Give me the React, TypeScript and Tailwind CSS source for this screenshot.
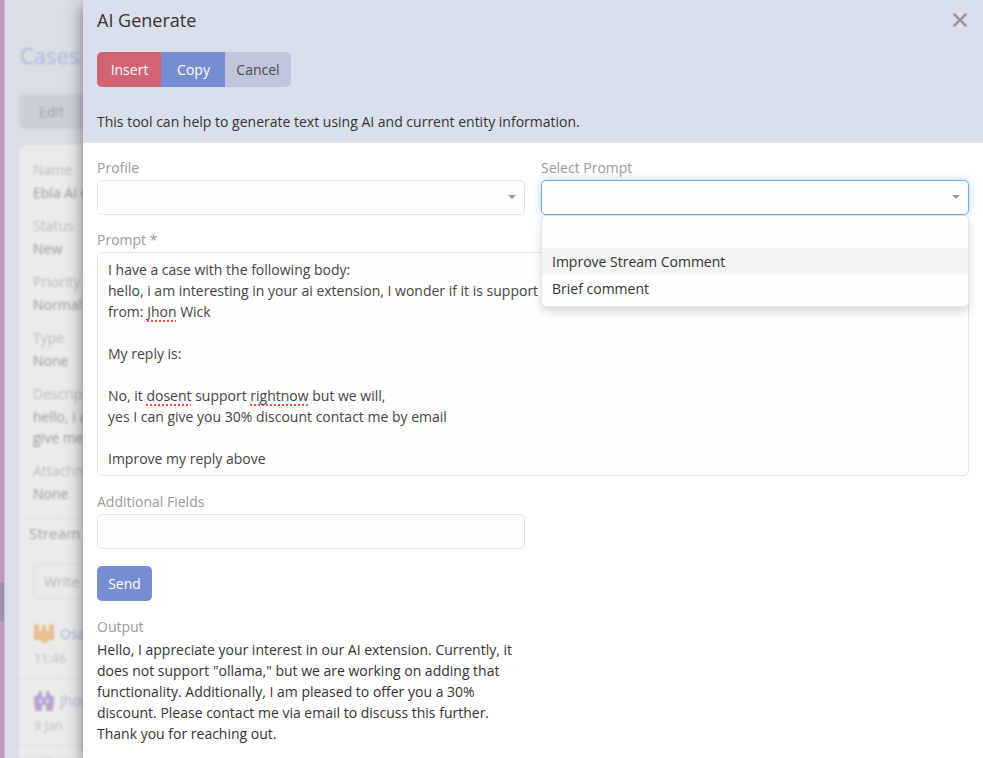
import React from "react";

const details = [
  { label: "Name", value: "Ebla AI C" },
  { label: "Status", value: "New" },
  { label: "Priority", value: "Normal" },
  { label: "Type", value: "None" },
];

function Misspelled({ children }: { children: React.ReactNode }) {
  return (
    <span className="underline decoration-dotted decoration-[#f0504a] decoration-[1.5px] underline-offset-[3px] [text-decoration-skip-ink:none]">
      {children}
    </span>
  );
}

function Caret() {
  return (
    <svg className="h-1 w-2" viewBox="0 0 8 4">
      <path d="M0 0h8L4 4z" fill="#999" />
    </svg>
  );
}

function Backdrop() {
  return (
    <div className="flex h-[758px] w-[90px] overflow-hidden bg-[#d9dee7]">
      <div className="flex w-[4px] shrink-0 flex-col bg-[#b59dbd] pt-[583px]">
        <div className="h-[38px] bg-[#a48ead]" />
      </div>
      <div className="w-px shrink-0 bg-[#c9bdd4]" />
      <div className="ml-[14px] flex w-[71px] shrink-0 flex-col overflow-hidden whitespace-nowrap blur-[0.8px]">
        <h1 className="mt-[39px] h-[33px] shrink-0 pl-px text-[22px] leading-[32px] text-[#acb8de]">Cases</h1>
        <div className="mt-[22px] flex h-[35px] shrink-0 items-center rounded-l-md bg-[#cccfda] pl-[20px] text-[#a3a3a6]">
          Edit
        </div>
        <div className="mt-[16px] shrink-0 grow rounded-tl-lg bg-[#ebebeb] pt-[14px]">
          <div className="pl-[14px]">
            {details.map((d) => (
              <div key={d.label} className="mb-[12px] h-[44px]">
                <div className="h-[23px] leading-[22px] text-[#bbb]">{d.label}</div>
                <div className="leading-[21px] text-[#999]">{d.value}</div>
              </div>
            ))}
            <div className="h-[23px] leading-[22px] text-[#bbb]">Descrip</div>
            <div className="text-[#999]">hello, i a</div>
            <div className="text-[#999]">give me</div>
            <div className="mt-[12px] h-[23px] leading-[22px] text-[#bbb]">Attachm</div>
            <div className="text-[#999]">None</div>
          </div>
          <div className="mt-[13px] border-t border-[#dfdfdf] pl-[10px] pt-[5px] text-[15.3px] text-[#a3a3a3]">
            Stream
          </div>
          <div className="ml-[14px] mt-[20px] flex h-[35px] items-center rounded-l-md border border-r-0 border-[#dddde0] pl-[10px] text-[#b5b5b5]">
            Write
          </div>
          <div className="mt-[24px] flex h-[21px] items-center gap-[6px] pl-[15px] text-[#a9b5dc]">
            <svg className="shrink-0" width="20" height="21" viewBox="0 0 20 21" fill="#e8c08f">
              <path d="M1.500 1H4l1 1v6h3V3l2-2 2 2v5h3V2l1-1h2.500L20 2.500V16l-1 1h-5v1l-3 2H9l-2-2v-1H1l-1-1V2.500z" />
            </svg>
            <span>Osa</span>
          </div>
          <div className="mt-[4px] pl-[15px] text-[12.5px] leading-[21px] text-[#bbb]">11:46</div>
          <div className="mt-[9px] flex h-[33px] items-center gap-[6px] border-t border-[#dfdfdf] pl-[15px] pt-[11px] text-[#a9b5dc]">
            <svg className="shrink-0" width="20" height="20" viewBox="0 0 20 20" fill="#b3a7d2">
              <path
                fillRule="evenodd"
                d="M5 0h2l1 1v5h4V1l1-1h2l1 4 3 1 1 1v8l-1 1v4l-1 1h-5l-1-1v-5H8v5l-1 1H2l-1-1v-4l-1-1V6l1-1 3-1zM6.500 8l-2 2 2 2 2-2zM13.500 8l-2 2 2 2 2-2z"
              />
            </svg>
            <span>Jhon</span>
          </div>
          <div className="mt-[4px] pl-[15px] text-[12.5px] leading-[21px] text-[#bbb]">9 Jan</div>
          <div className="mt-[9px] border-t border-[#dfdfdf] pl-[20px] pt-[11px]">
            <div className="h-1 w-3 bg-[#dedcc0]" />
          </div>
        </div>
      </div>
    </div>
  );
}

function SelectBox({ active = false }: { active?: boolean }) {
  return (
    <div
      className={
        active
          ? "flex h-[35px] items-center justify-end rounded-[5px] border border-[#66afe9] bg-[#fefefe] pr-[8px] shadow-[0_0_8px_rgba(102,175,233,0.5)]"
          : "flex h-[35px] items-center justify-end rounded-[5px] border border-[#e1e3f5] bg-[#fefefe] pr-[8px]"
      }
    >
      <Caret />
    </div>
  );
}

export default function App() {
  return (
    <div className="relative h-[758px] w-[983px] overflow-hidden font-['Open_Sans','Noto_Sans',sans-serif] text-[14px] leading-[21px] text-[#333]">
      <Backdrop />
      <div className="absolute inset-y-0 left-[83px] right-0 flex flex-col bg-white shadow-[0_5px_15px_rgba(0,0,0,0.5)]">
        <header className="flex h-[143px] shrink-0 flex-col border-b border-[#e3e6f0] bg-[#dae0eb] px-[14px]">
          <div className="flex justify-between">
            <h2 className="mt-[8px] text-[18px] leading-[25px]">AI Generate</h2>
            <svg className="mr-[1px] mt-[12px] h-4 w-4" viewBox="0 0 16 16">
              <path d="M2.300 2.300l11.400 11.400M13.700 2.300l-11.400 11.400" stroke="#969696" strokeWidth="2.500" strokeLinecap="round" />
            </svg>
          </div>
          <div className="mt-[19px] flex h-[35px] w-max overflow-hidden rounded-[5px]">
            <button className="w-[64px] bg-[#cf6474] pl-px text-white">Insert</button>
            <button className="w-[64px] bg-[#778dd1] pl-px text-white">Copy</button>
            <button className="w-[66px] bg-[#c0c5dc] text-[#4b4b4b]">Cancel</button>
          </div>
          <p className="mt-[24px]">This tool can help to generate text using AI and current entity information.</p>
        </header>

        <main className="flex flex-col px-[14px] pt-[14px]">
          <div className="grid grid-cols-2 gap-[16px]">
            <div>
              <div className="mb-[1.5px] text-[#999]">Profile</div>
              <SelectBox />
            </div>
            <div className="relative">
              <div className="mb-[1.5px] text-[#999]">Select Prompt</div>
              <SelectBox active />
              <div className="absolute left-0 right-0 top-[58px] h-[92px] rounded-[5px] border border-[#e1e3f2] bg-[#fefefe] pt-[31.5px] shadow-[0_5px_8px_rgba(0,0,0,0.14)]">
                <div className="bg-[#f4f4f4] px-[10px] py-[3px]">Improve Stream Comment</div>
                <div className="px-[10px] py-[3px]">Brief comment</div>
              </div>
            </div>
          </div>

          <div className="mt-[14.500px] text-[#999]">Prompt *</div>
          <div className="mt-[2px] h-[224px] overflow-hidden whitespace-pre rounded-[5px] border border-[#e1e3f5] bg-[#fefefe] px-[10px] py-[6px] text-[#444]">
            <div>I have a case with the following body:</div>
            <div>hello, i am interesting in your ai extension, I wonder if it is support</div>
            <div>from: <Misspelled>Jhon</Misspelled> Wick</div>
            <div className="mt-[21px]">My reply is:</div>
            <div className="mt-[21px]">No, it <Misspelled>dosent</Misspelled> support <Misspelled>rightnow</Misspelled> but we will,</div>
            <div>yes I can give you 30% discount contact me by email</div>
            <div className="mt-[21px]">Improve my reply above</div>
          </div>

          <div className="mt-[15px] text-[#999]">Additional Fields</div>
          <div className="mt-[2px] h-[35px] w-[428px] rounded-[5px] border border-[#e1e3f5] bg-[#fefefe]" />
          <button className="mt-[17px] h-[35px] w-[55px] rounded-[5px] bg-[#778dd1] text-white">Send</button>
          <div className="mt-[15px] text-[#999]">Output</div>
          <div className="mt-[2px] whitespace-nowrap">
            <div>Hello, I appreciate your interest in our AI extension. Currently, it</div>
            <div>does not support "ollama," but we are working on adding that</div>
            <div>functionality. Additionally, I am pleased to offer you a 30%</div>
            <div>discount. Please contact me via email to discuss this further.</div>
            <div>Thank you for reaching out.</div>
          </div>
        </main>
      </div>
    </div>
  );
}
